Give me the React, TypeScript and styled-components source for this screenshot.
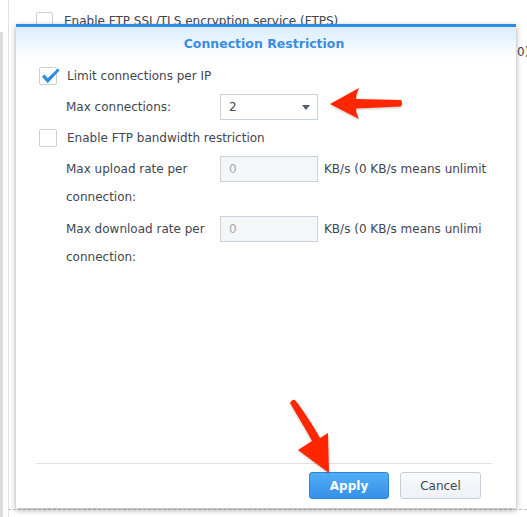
import { createGlobalStyle } from "styled-components";
import styled from "styled-components";
import type { FC, ReactNode } from "react";

const GlobalStyle = createGlobalStyle`
  html, body {
    margin: 0;
    padding: 0;
    background: #ffffff;
  }
  body {
    font-family: "DejaVu Sans", Verdana, sans-serif;
    font-size: 12px;
    color: #3f4650;
  }
`;

const Page = styled.div`
  position: relative;
  width: 527px;
  height: 517px;
  overflow: hidden;
  display: flex;
  background: #ffffff;
`;

// ---- page behind the dialog ----
const SideStrip = styled.div`
  width: 3px;
  margin-top: 32px;
  margin-right: 5px;
  background: #dadada;
`;
const BgPanel = styled.div`
  flex: 1;
  display: flex;
  flex-direction: column;
  border-left: 1px solid #e2e2e2;
  padding-left: 27px;
  min-width: 0;
`;
const BgCheckRow = styled.div`
  display: flex;
  align-items: center;
  gap: 11px;
  margin-top: 12px;
  height: 17px;
  white-space: nowrap;
  color: #3f4650;
`;
const BgBox = styled.span`
  width: 15px;
  height: 15px;
  border: 1px solid #c8d1da;
  border-radius: 2px;
  background: #fff;
  flex: none;
`;
const BgStray = styled.div<{ $indent: number }>`
  margin-top: 15px;
  padding-left: ${(p) => p.$indent}px;
  line-height: 16px;
  white-space: nowrap;
  color: #3f4650;
`;
const Spacer = styled.div`
  flex: 1;
`;
const DashedRule = styled.div`
  border-top: 1px dashed #b9c9da;
  margin: 0 0 7px -28px;
`;

// ---- dialog ----
const Dialog = styled.div`
  position: absolute;
  left: 16px;
  top: 24px;
  width: 500px;
  height: 484px;
  box-sizing: border-box;
  border-top: 3px solid #2f8de4;
  background: #ffffff;
  box-shadow: 0 2px 6px rgba(0, 0, 0, 0.35);
  display: flex;
  flex-direction: column;
`;
const Header = styled.div`
  height: 32px;
  flex: none;
  display: flex;
  align-items: center;
  justify-content: center;
  background: linear-gradient(#d9edfd, #ffffff);
`;
const Title = styled.div`
  font-size: 12.5px;
  font-weight: bold;
  color: #3a8de2;
  margin-left: -4px;
`;
const Body = styled.div`
  flex: 1;
  padding: 4px 0 0 23px;
  overflow: hidden;
`;
const CheckRow = styled.div`
  display: flex;
  align-items: center;
  gap: 10px;
  height: 26px;
  margin-bottom: 5px;
  white-space: nowrap;
`;
const BoxWrap = styled.span`
  position: relative;
  width: 16px;
  height: 16px;
  border: 1px solid #c8d1da;
  border-radius: 2px;
  background: #fff;
  flex: none;
`;
const CheckMark = styled.svg`
  position: absolute;
  left: -1px;
  top: -1px;
  overflow: visible;
`;
const FieldRow = styled.div`
  display: flex;
  align-items: flex-start;
  padding-left: 27px;
  margin-bottom: 5px;
`;
const Label = styled.div<{ $wrap?: boolean }>`
  width: 150px;
  margin-right: 4px;
  line-height: ${(p) => (p.$wrap ? "28px" : "26px")};
  margin-top: ${(p) => (p.$wrap ? "-1px" : "0")};
`;
const Combo = styled.div`
  width: 98px;
  height: 26px;
  box-sizing: border-box;
  border: 1px solid #c8d3dd;
  background: #ffffff;
  display: flex;
  align-items: center;
  justify-content: space-between;
  padding: 0 7px 0 8px;
  color: #3f4650;
`;
const Caret = styled.span`
  width: 0;
  height: 0;
  border-left: 4px solid transparent;
  border-right: 4px solid transparent;
  border-top: 5px solid #555e68;
`;
const TextBox = styled.input`
  width: 98px;
  height: 26px;
  box-sizing: border-box;
  border: 1px solid #c8d3dd;
  background: #f4f6f8;
  padding: 0 8px;
  margin: 0;
  font-family: inherit;
  font-size: 12px;
  color: #a3aab2;
  outline: none;
`;
const Suffix = styled.div`
  margin-left: 6px;
  line-height: 26px;
  white-space: nowrap;
`;
const Footer = styled.div`
  flex: none;
  margin: 0 24px 0 20px;
  border-top: 1px solid #e1e1e1;
  padding: 8px 11px 9px 0;
  display: flex;
  justify-content: flex-end;
  gap: 11px;
`;
const Button = styled.button<{ $primary?: boolean; $w: number }>`
  width: ${(p) => p.$w}px;
  height: 27px;
  box-sizing: border-box;
  border-radius: 3px;
  font-family: inherit;
  font-size: 12px;
  padding: 0;
  cursor: pointer;
  font-weight: ${(p) => (p.$primary ? "bold" : "normal")};
  color: ${(p) => (p.$primary ? "#ffffff" : "#3f4650")};
  border: 1px solid ${(p) => (p.$primary ? "#2c86d8" : "#c6cfd8")};
  background: ${(p) =>
    p.$primary
      ? "linear-gradient(#52adf7, #3590e9)"
      : "linear-gradient(#f8fafc, #eef2f6)"};
`;

// ---- annotations ----
const Overlay = styled.svg`
  position: absolute;
  left: 0;
  top: 0;
  pointer-events: none;
`;

const Checkbox: FC<{ checked?: boolean }> = ({ checked }) => (
  <BoxWrap>
    {checked && (
      <CheckMark width="22" height="18" viewBox="0 0 22 18">
        <path d="M3 9.6 L5.6 7.6 L8.6 11.2 L18.8 1.6 L20.6 3.2 L8.7 16.2 Z" fill="#2b8be3" />
      </CheckMark>
    )}
  </BoxWrap>
);

const Field: FC<{ label: string; wrap?: boolean; children: ReactNode }> = ({
  label,
  wrap,
  children,
}) => (
  <FieldRow>
    <Label $wrap={wrap}>{label}</Label>
    {children}
  </FieldRow>
);

const App: FC = () => {
  return (
    <>
      <GlobalStyle />
      <Page>
        <SideStrip />
        <BgPanel>
          <BgCheckRow>
            <BgBox />
            Enable FTP SSL/TLS encryption service (FTPS)
          </BgCheckRow>
          <BgStray $indent={481}>0)</BgStray>
          <Spacer />
          <DashedRule />
        </BgPanel>

        <Dialog>
          <Header>
            <Title>Connection Restriction</Title>
          </Header>
          <Body>
            <CheckRow>
              <Checkbox checked />
              Limit connections per IP
            </CheckRow>
            <Field label="Max connections:">
              <Combo>
                2
                <Caret />
              </Combo>
            </Field>
            <CheckRow>
              <Checkbox />
              Enable FTP bandwidth restriction
            </CheckRow>
            <Field label="Max upload rate per connection:" wrap>
              <TextBox disabled readOnly value="0" />
              <Suffix>KB/s (0 KB/s means unlimit</Suffix>
            </Field>
            <Field label="Max download rate per connection:" wrap>
              <TextBox disabled readOnly value="0" />
              <Suffix>KB/s (0 KB/s means unlimi</Suffix>
            </Field>
          </Body>
          <Footer>
            <Button $primary $w={80}>
              Apply
            </Button>
            <Button $w={81}>Cancel</Button>
          </Footer>
        </Dialog>

        <Overlay width="527" height="517" viewBox="0 0 527 517">
          <defs>
            <filter id="arrowShadow" x="-20%" y="-20%" width="140%" height="140%">
              <feDropShadow dx="0" dy="1" stdDeviation="1" floodColor="#000" floodOpacity="0.25" />
            </filter>
          </defs>
          <path
            d="M330 104 L359 88 Q356 94 356 99 L401 100 Q403 103 401 106.5 L356 108.5 Q356 113 359 119 Z"
            fill="#ff2700"
            filter="url(#arrowShadow)"
          />
          <path
            d="M290 403 C297 415 305 428 312 441 L298 450 L329 473 L328 433 L320 438 C313 425 303 410 295 400 Q292 399 290 403 Z"
            fill="#ff2700"
            filter="url(#arrowShadow)"
          />
        </Overlay>
      </Page>
    </>
  );
};

export default App;
